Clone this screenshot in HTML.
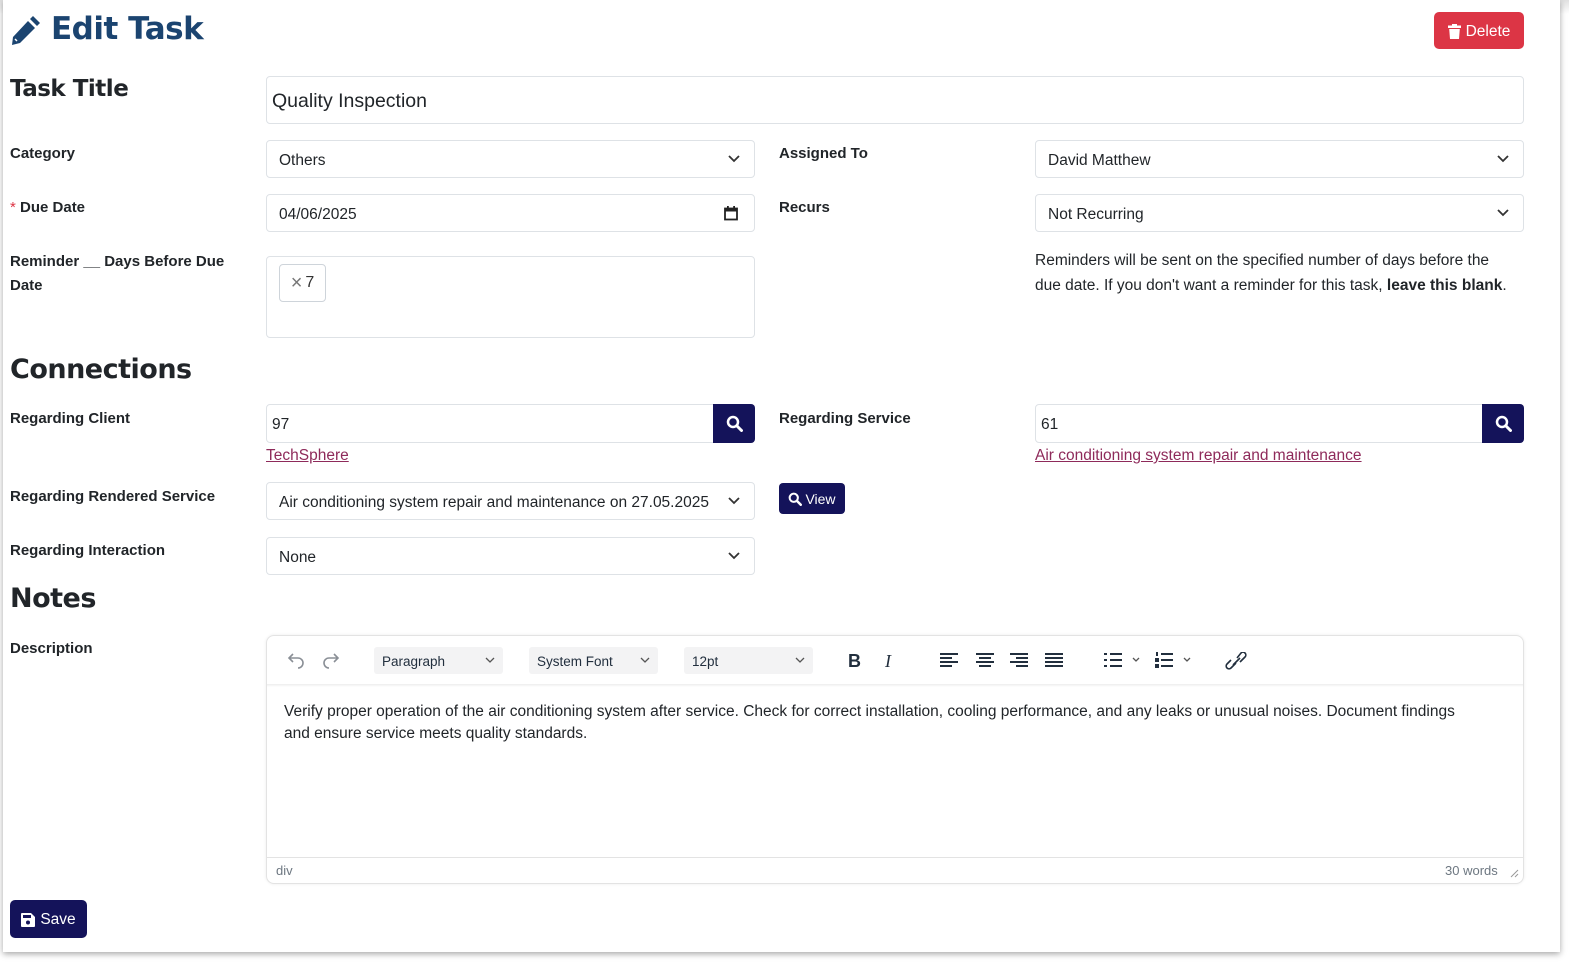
<!DOCTYPE html>
<html><head><meta charset="utf-8"><style>
*{box-sizing:border-box;margin:0;padding:0}
body{width:1569px;height:962px;background:#fff;font-family:"Liberation Sans",sans-serif;color:#212529;position:relative;overflow:hidden}
.card{position:absolute;left:3px;top:0;width:1557px;height:952px;background:#fff;box-shadow:0 2px 6px rgba(0,0,0,.35)}
.topsh{position:absolute;left:0;top:0;width:1569px;height:14px;background:linear-gradient(#e0e0e0,#fff)}
.a{position:absolute}
.lbl{position:absolute;left:10px;font-weight:bold;font-size:15px;color:#212529;margin-top:1px}
.inp{position:absolute;border:1px solid #dee2e6;border-radius:4px;background:#fff;font-size:15.5px;padding-left:12px;padding-top:3px;display:flex;align-items:center;color:#212529}
.chev{position:absolute;right:14px;top:50%;margin-top:-4px}
h2{position:absolute;left:10px;font-size:27px;font-weight:bold;color:#212529;font-family:"DejaVu Sans","Liberation Sans",sans-serif;letter-spacing:-0.5px}
.btn{position:absolute;background:#14135a;border-radius:4px;color:#fff;display:flex;align-items:center;justify-content:center}
a{color:#8e2a5a;text-decoration:underline;font-size:15.5px}
.tb{position:absolute;top:647px;height:27px;background:#f3f3f4;border-radius:3px;font-size:13.5px;display:flex;align-items:center;padding-left:8px;padding-top:2px;color:#222f3e}
</style></head><body>
<div class="topsh"></div>
<div class="card"></div>

<svg class="a" style="left:10px;top:14px" width="32" height="32" viewBox="0 0 32 32"><path d="M23 2 L30 9 L27 12 L20 5 Z" fill="#1b4470"/><path d="M18 7 L25 14 L10 29 L2 31 L3 23 Z" fill="#1b4470"/><path d="M5 25 L7 27" stroke="#fff" stroke-width="1.5"/></svg>
<div class="a" style="left:51px;top:11px;font-size:31px;font-weight:bold;color:#1b4470;font-family:'DejaVu Sans','Liberation Sans',sans-serif;letter-spacing:-0.5px">Edit Task</div>

<div class="a" style="left:1434px;top:12px;width:90px;height:37px;background:#dc3545;border-radius:5px;color:#fff;font-size:15.5px;display:flex;align-items:center;justify-content:center;gap:5px;padding-top:2px">
<svg width="13" height="15" viewBox="0 0 13 15"><rect x="0" y="1.5" width="13" height="2.5" fill="#fff"/><rect x="4" y="0" width="5" height="2" fill="#fff"/><path d="M1.2 5 H11.8 L11 15 H2 Z" fill="#fff"/></svg>Delete</div>

<div class="a" style="left:10px;top:76px;font-size:23px;font-weight:bold;font-family:'DejaVu Sans','Liberation Sans',sans-serif;letter-spacing:-0.5px">Task Title</div>
<div class="inp" style="left:266px;top:76px;width:1258px;height:48px;font-size:19.5px;padding-left:5px">Quality Inspection</div>

<div class="lbl" style="top:144px">Category</div>
<div class="inp" style="left:266px;top:140px;width:489px;height:38px">Others<svg class="chev" width="12" height="8"><path d="M1 1 L6 6 L11 1" stroke="#333" stroke-width="1.8" fill="none"/></svg></div>
<div class="lbl" style="left:779px;top:144px">Assigned To</div>
<div class="inp" style="left:1035px;top:140px;width:489px;height:38px">David Matthew<svg class="chev" width="12" height="8"><path d="M1 1 L6 6 L11 1" stroke="#333" stroke-width="1.8" fill="none"/></svg></div>

<div class="lbl" style="top:198px"><span style="color:#dc3545;font-weight:normal">*</span> Due Date</div>
<div class="inp" style="left:266px;top:194px;width:489px;height:38px">04/06/2025<svg class="a" style="right:16px;top:11px" width="14" height="15" viewBox="0 0 14 15"><rect x="1" y="2.5" width="12" height="11" fill="none" stroke="#222" stroke-width="1.8"/><rect x="1" y="2.5" width="12" height="3" fill="#222"/><rect x="3" y="0" width="1.8" height="3" fill="#222"/><rect x="9.2" y="0" width="1.8" height="3" fill="#222"/></svg></div>
<div class="lbl" style="left:779px;top:198px">Recurs</div>
<div class="inp" style="left:1035px;top:194px;width:489px;height:38px">Not Recurring<svg class="chev" width="12" height="8"><path d="M1 1 L6 6 L11 1" stroke="#333" stroke-width="1.8" fill="none"/></svg></div>

<div class="lbl" style="top:249px;line-height:24px;width:240px">Reminder __ Days Before Due Date</div>
<div class="inp" style="left:266px;top:256px;width:489px;height:82px;align-items:flex-start;padding:7px 12px">
<div style="border:1px solid #ced4da;border-radius:4px;width:47px;height:38px;display:flex;align-items:center;justify-content:center;font-size:16px;gap:3px;color:#333"><span style="color:#777;font-size:20px;font-weight:300">×</span>7</div></div>
<div class="a" style="left:1035px;top:248px;font-size:15.5px;line-height:25px;width:475px;color:#212529">Reminders will be sent on the specified number of days before the due date. If you don't want a reminder for this task, <b>leave this blank</b>.</div>

<h2 style="top:354px">Connections</h2>
<div class="lbl" style="top:409px">Regarding Client</div>
<div class="inp" style="left:266px;top:404px;width:448px;height:39px;border-radius:4px 0 0 4px;padding-left:5px">97</div>
<div class="btn" style="left:713px;top:404px;width:42px;height:39px;border-radius:0 4px 4px 0"><svg width="17" height="17" viewBox="0 0 17 17"><circle cx="7" cy="7" r="5" stroke="#fff" stroke-width="2.5" fill="none"/><path d="M11 11 L15.5 15.5" stroke="#fff" stroke-width="3" stroke-linecap="round"/></svg></div>
<a class="a" style="left:266px;top:447px">TechSphere</a>
<div class="lbl" style="left:779px;top:409px">Regarding Service</div>
<div class="inp" style="left:1035px;top:404px;width:448px;height:39px;border-radius:4px 0 0 4px;padding-left:5px">61</div>
<div class="btn" style="left:1482px;top:404px;width:42px;height:39px;border-radius:0 4px 4px 0"><svg width="17" height="17" viewBox="0 0 17 17"><circle cx="7" cy="7" r="5" stroke="#fff" stroke-width="2.5" fill="none"/><path d="M11 11 L15.5 15.5" stroke="#fff" stroke-width="3" stroke-linecap="round"/></svg></div>
<a class="a" style="left:1035px;top:447px">Air conditioning system repair and maintenance</a>

<div class="lbl" style="top:487px">Regarding Rendered Service</div>
<div class="inp" style="left:266px;top:482px;width:489px;height:38px;overflow:hidden;white-space:nowrap"><span style="width:440px;overflow:hidden;display:inline-block">Air conditioning system repair and maintenance on 27.05.2025</span><svg class="chev" width="12" height="8"><path d="M1 1 L6 6 L11 1" stroke="#333" stroke-width="1.8" fill="none"/></svg></div>
<div class="btn" style="left:779px;top:483px;width:66px;height:31px;font-size:14px;gap:3px"><svg width="14" height="14" viewBox="0 0 17 17"><circle cx="7" cy="7" r="5" stroke="#fff" stroke-width="2.5" fill="none"/><path d="M11 11 L15.5 15.5" stroke="#fff" stroke-width="3" stroke-linecap="round"/></svg>View</div>

<div class="lbl" style="top:541px">Regarding Interaction</div>
<div class="inp" style="left:266px;top:537px;width:489px;height:38px">None<svg class="chev" width="12" height="8"><path d="M1 1 L6 6 L11 1" stroke="#333" stroke-width="1.8" fill="none"/></svg></div>

<h2 style="top:583px">Notes</h2>
<div class="lbl" style="top:639px">Description</div>
<div class="a" style="left:266px;top:635px;width:1258px;height:249px;border:1px solid #e3e3e3;border-radius:8px;box-shadow:0 0 3px rgba(0,0,0,.08)"></div>
<div class="a" style="left:267px;top:684px;width:1256px;height:3px;background:linear-gradient(rgba(0,0,0,.07),transparent)"></div>
<svg class="a" style="left:286px;top:650px" width="60" height="20" viewBox="0 0 60 20"><path d="M7 4 L3 8 L7 12 M3 8 H12 a5 5 0 0 1 0 10" stroke="#8a8f96" stroke-width="1.6" fill="none"/><path d="M48 4 L52 8 L48 12 M52 8 H43 a5 5 0 0 0 0 10" stroke="#8a8f96" stroke-width="1.6" fill="none"/></svg>
<div class="tb" style="left:374px;width:129px">Paragraph<svg class="a" style="right:8px;top:10px" width="10" height="7"><path d="M1 1 L5 5 L9 1" stroke="#555" stroke-width="1.3" fill="none"/></svg></div>
<div class="tb" style="left:529px;width:129px">System Font<svg class="a" style="right:8px;top:10px" width="10" height="7"><path d="M1 1 L5 5 L9 1" stroke="#555" stroke-width="1.3" fill="none"/></svg></div>
<div class="tb" style="left:684px;width:129px">12pt<svg class="a" style="right:8px;top:10px" width="10" height="7"><path d="M1 1 L5 5 L9 1" stroke="#555" stroke-width="1.3" fill="none"/></svg></div>
<div class="a" style="left:848px;top:651px;font-weight:bold;font-size:18px;color:#222f3e">B</div>
<div class="a" style="left:885px;top:651px;font-style:italic;font-size:18px;color:#222f3e;font-family:'Liberation Serif',serif">I</div>
<svg class="a" style="left:940px;top:652px" width="130" height="16" viewBox="0 0 130 16">
<g fill="#222f3e"><rect x="0" y="1" width="18" height="2"/><rect x="0" y="5" width="12" height="2"/><rect x="0" y="9" width="18" height="2"/><rect x="0" y="13" width="12" height="2"/>
<rect x="36" y="1" width="18" height="2"/><rect x="39" y="5" width="12" height="2"/><rect x="36" y="9" width="18" height="2"/><rect x="39" y="13" width="12" height="2"/>
<rect x="70" y="1" width="18" height="2"/><rect x="76" y="5" width="12" height="2"/><rect x="70" y="9" width="18" height="2"/><rect x="76" y="13" width="12" height="2"/>
<rect x="105" y="1" width="18" height="2"/><rect x="105" y="5" width="18" height="2"/><rect x="105" y="9" width="18" height="2"/><rect x="105" y="13" width="18" height="2"/></g></svg>
<svg class="a" style="left:1104px;top:652px" width="150" height="18" viewBox="0 0 150 18">
<g fill="#222f3e"><rect x="0" y="1" width="3" height="2"/><rect x="6" y="1" width="12" height="2"/><rect x="0" y="7" width="3" height="2"/><rect x="6" y="7" width="12" height="2"/><rect x="0" y="13" width="3" height="2"/><rect x="6" y="13" width="12" height="2"/>
<rect x="57" y="1" width="12" height="2"/><rect x="57" y="7" width="12" height="2"/><rect x="57" y="13" width="12" height="2"/><rect x="52" y="0" width="2" height="4"/><rect x="51" y="6" width="4" height="4"/><rect x="51" y="12" width="4" height="4"/></g>
<path d="M29 6 L32 9 L35 6 M80 6 L83 9 L86 6" stroke="#555" stroke-width="1.3" fill="none"/>
<path d="M132 9 L127 14 a2.5 2.5 0 0 1 -4 -4 L127 6 M136 8 L141 3 a2.5 2.5 0 0 0 -4 -4 L133 4 M129 11 L136 4" stroke="#222f3e" stroke-width="1.6" fill="none" transform="translate(0,2)"/></svg>
<div class="a" style="left:284px;top:701px;width:1200px;font-size:15.5px;line-height:22px;color:#212529">Verify proper operation of the air conditioning system after service. Check for correct installation, cooling performance, and any leaks or unusual noises. Document findings and ensure service meets quality standards.</div>
<div class="a" style="left:267px;top:857px;width:1256px;height:1px;background:#e3e3e3"></div>
<div class="a" style="left:276px;top:863px;font-size:13px;color:#6d7781">div</div>
<div class="a" style="left:1445px;top:863px;font-size:13px;color:#6d7781">30 words</div>
<svg class="a" style="left:1509px;top:868px" width="10" height="10"><path d="M9 2 L2 9 M9 6 L6 9" stroke="#999" stroke-width="1"/></svg>

<div class="btn" style="left:10px;top:900px;width:77px;height:38px;font-size:15.5px;gap:5px;border-radius:5px;padding-top:2px">
<svg width="14" height="14" viewBox="0 0 14 14"><path d="M0 1 a1 1 0 0 1 1 -1 H10 L14 4 V13 a1 1 0 0 1 -1 1 H1 a1 1 0 0 1 -1 -1 Z" fill="#fff"/><rect x="2" y="2" width="8" height="3" fill="#14135a"/><circle cx="7" cy="9.5" r="2" fill="#14135a"/></svg>Save</div>
</body></html>
